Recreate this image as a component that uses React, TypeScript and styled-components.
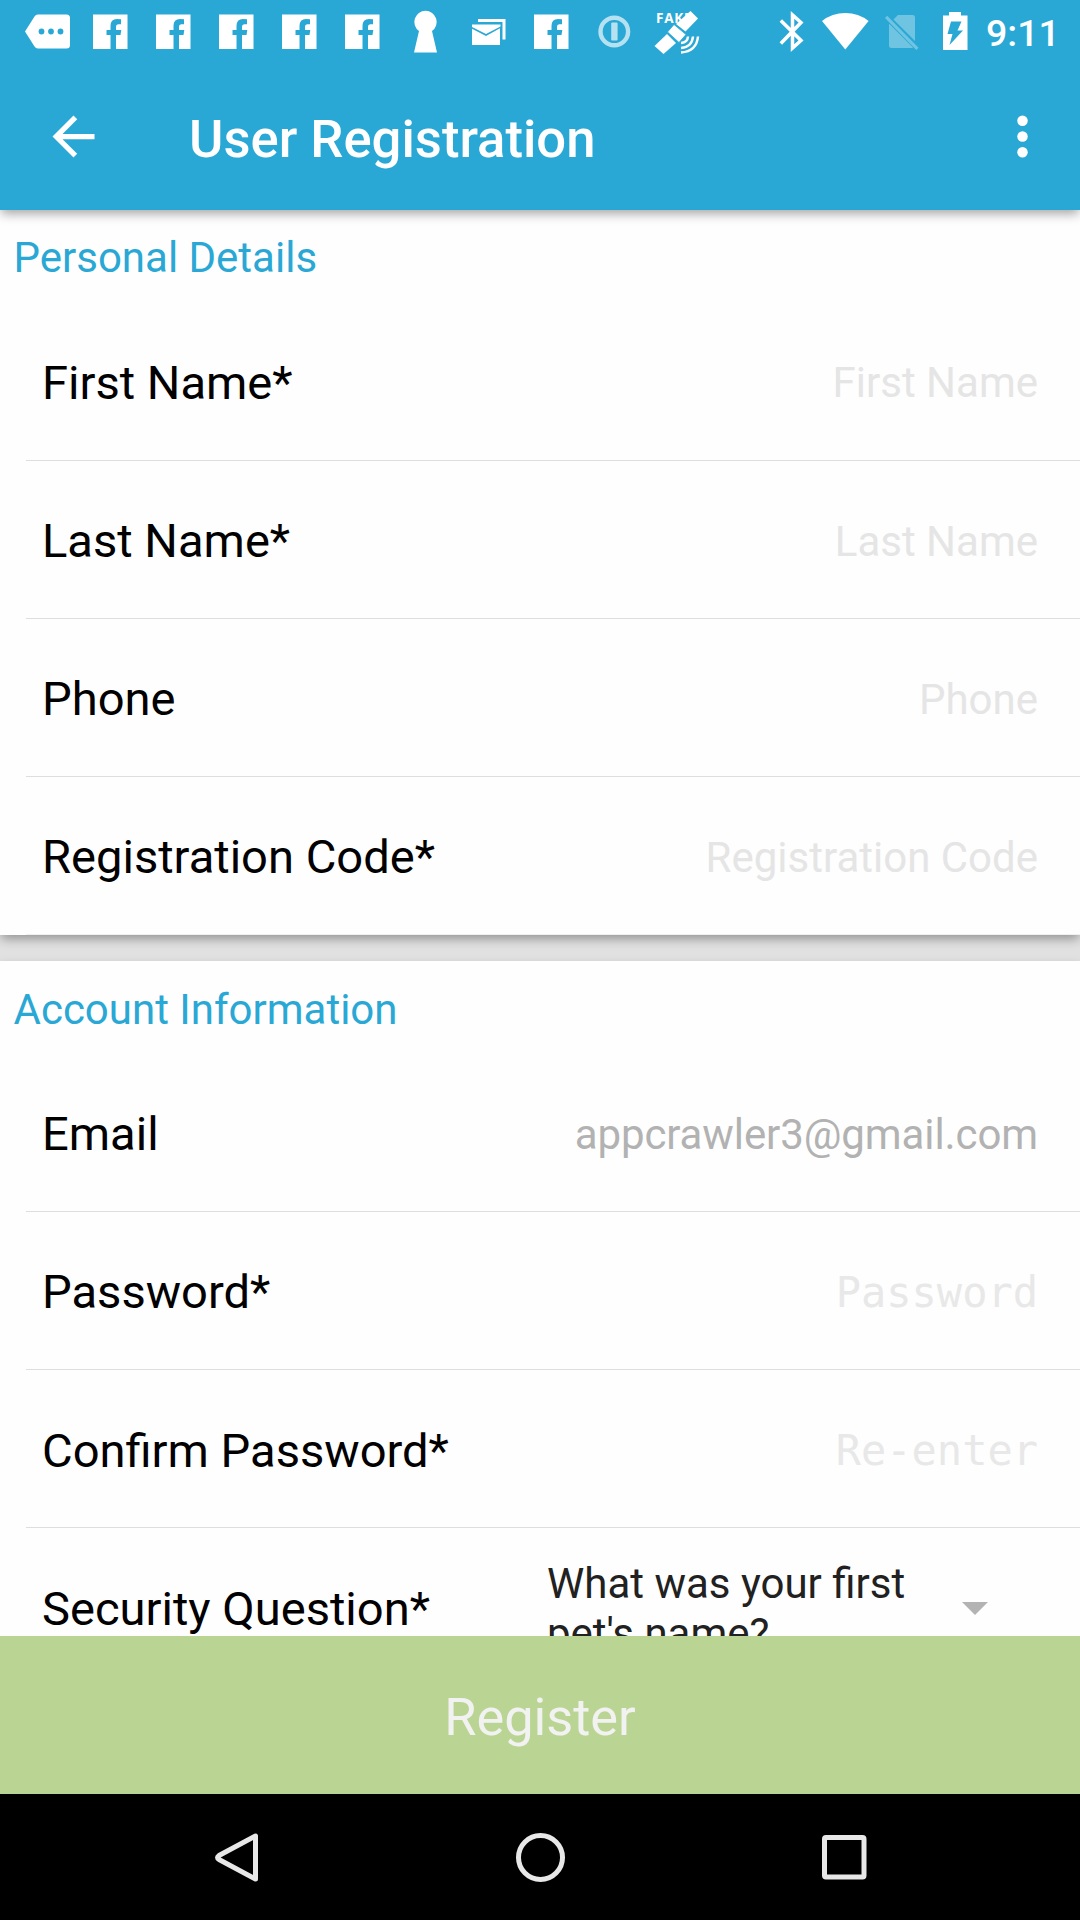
import React from "react";
import styled, { createGlobalStyle } from "styled-components";

const BLUE = "#2aa8d5";

const GlobalStyle = createGlobalStyle`
  * { box-sizing: border-box; }
  body { margin: 0; background: #e1e1e1; font-family: Roboto, "Noto Sans", sans-serif; }
`;

const Screen = styled.div`
  width: 1080px;
  height: 1920px;
  display: flex;
  flex-direction: column;
  overflow: hidden;
  background: #e1e1e1;
`;

const Header = styled.header`
  flex: none;
  position: relative;
  z-index: 2;
  background: ${BLUE};
  box-shadow: 0 5px 10px -1px rgba(0, 0, 0, 0.34);
`;

const StatusBar = styled.div`
  height: 63px;
  padding: 0 22px 0 15px;
  display: flex;
  align-items: center;
  justify-content: space-between;
`;

const IconStrip = styled.div`
  display: flex;
`;

const StatusIcon = styled.svg<{ $w?: number }>`
  display: block;
  flex: none;
  width: ${(p) => p.$w ?? 63}px;
  height: 63px;
  fill: #fff;
`;

const SystemStrip = styled.div`
  display: flex;
  align-items: center;
`;

const Clock = styled.span`
  width: 72px;
  padding-top: 3px;
  font-size: 37.5px;
  line-height: 43px;
  font-weight: 500;
  color: #fff;
  white-space: nowrap;
`;

const Toolbar = styled.div`
  height: 147px;
  padding: 0 26px 0 42px;
  display: flex;
  align-items: center;
`;

const ToolbarIcon = styled.svg`
  display: block;
  width: 63px;
  height: 63px;
  fill: #fff;
`;

const Title = styled.h1`
  flex: 1;
  margin: 0;
  padding: 4px 0 0 84px;
  font-size: 52.6px;
  line-height: 62px;
  font-weight: 500;
  color: #fff;
`;

const Form = styled.main`
  flex: none;
  height: 1426px;
  display: flex;
  flex-direction: column;
  gap: 26.1px;
  overflow: hidden;
`;

const Card = styled.section`
  flex: none;
  background: #fefefe;
  box-shadow: 0 5px 10px -1px rgba(0, 0, 0, 0.34);
`;

const SectionTitle = styled.h2`
  height: 92.5px;
  margin: 0;
  padding: 3px 0 0 13.5px;
  display: flex;
  align-items: center;
  font-size: 42px;
  font-weight: 400;
  color: ${BLUE};
`;

const Row = styled.div`
  height: 158.2px;
  margin-left: 26px;
  padding: 0 42px 0 16px;
  display: flex;
  align-items: center;
  justify-content: space-between;
  border-bottom: 1px solid #dedede;
  &:last-child { border-bottom-color: #f0f0f0; }
`;

const Label = styled.span`
  padding-top: 2.4px;
  font-size: 47.1px;
  color: #000;
`;

const Hint = styled.span<{ $mono?: boolean; $filled?: boolean }>`
  padding-top: 3.8px;
  font-family: ${(p) => (p.$mono ? '"DejaVu Sans Mono", monospace' : "inherit")};
  font-size: 42px;
  letter-spacing: ${(p) => (p.$filled ? "-0.1px" : "normal")};
  color: ${(p) => (p.$filled ? "#b2b2b2" : p.$mono ? "#e8e8e8" : "#e5e5e5")};
`;

const Picker = styled.div`
  width: 491px;
  padding-top: 3px;
  display: flex;
  align-items: center;
  justify-content: space-between;
`;

const PickerText = styled.span`
  width: 380px;
  font-size: 42px;
  line-height: 49.2px;
  color: #212121;
`;

const Caret = styled.svg`
  width: 26px;
  height: 13px;
  margin-right: 50px;
  fill: #b3b3b3;
`;

const RegisterButton = styled.button`
  flex: none;
  position: relative;
  z-index: 1;
  height: 158px;
  border: 0;
  padding: 3px 0 0;
  background: #bad593;
  color: #f2f2f2;
  font-family: inherit;
  font-size: 52.3px;
`;

const NavBar = styled.nav`
  flex: none;
  height: 126px;
  padding: 0 205px;
  display: flex;
  align-items: center;
  justify-content: space-between;
  background: #000;
`;

const NavIcon = styled.svg`
  display: block;
  width: 63px;
  height: 63px;
  fill: none;
  stroke: #e8e8e8;
  stroke-width: 5;
`;

const Messages = () => (
  <StatusIcon viewBox="0 0 63 63">
    <path d="M10 31.5 19.5 16.5Q20.700 14.500 23 14.500H51.500Q55 14.500 55 18V45Q55 48.500 51.500 48.500H23Q20.700 48.500 19.500 46.500Z" />
    <g fill={BLUE}>
      <circle cx="26.500" cy="31.500" r="2.900" />
      <circle cx="36" cy="31.500" r="2.900" />
      <circle cx="45.500" cy="31.500" r="2.900" />
    </g>
  </StatusIcon>
);

const Facebook = () => (
  <StatusIcon viewBox="0 0 63 63">
    <path d="M15 14.500H49.500V49H38V35H42.500L43.300 30H38V27Q38 24.200 40.600 24.200H43V19.300Q41 19 39 19Q32.500 19 32.500 26V30H28.500V35H32.500V49H15Z" />
  </StatusIcon>
);

const Keyhole = () => (
  <StatusIcon viewBox="0 0 63 63">
    <path d="M32.500 10.800a11.200 11.200 0 0 1 6.500 20.300L44 52.500H21L26 31.100A11.200 11.200 0 0 1 32.500 10.800Z" />
  </StatusIcon>
);

const Mail = () => (
  <StatusIcon viewBox="0 0 63 63">
    <path d="M22 19H49.500V39.500H46.500V22H22Z" />
    <path d="M16 24.500H44.500V26.500L30 34 16 27Z" />
    <path d="M16 28.800 30 36 44 28.300V45H16Z" />
  </StatusIcon>
);

const Info = () => (
  <StatusIcon viewBox="0 0 63 63">
    <g opacity="0.66">
      <circle cx="32.300" cy="31.500" r="13.800" fill="none" stroke="#fff" strokeWidth="4.400" />
      <rect x="29.200" y="22.500" width="6.400" height="18" rx="1" />
    </g>
  </StatusIcon>
);

const Satellite = () => (
  <StatusIcon viewBox="0 0 63 63">
    <text x="11" y="23" fontSize="13.500" fontWeight="700" letterSpacing="0.8" fontFamily="Open Sans, sans-serif">FAKE</text>
    <path d="M45.500 11 53 18.500 40.500 31.500 31 24Z" />
    <path d="M29 24.500 41 34.500 34 42.500 22.500 32Z" stroke={BLUE} strokeWidth="0.8" />
    <path d="M22 34 31 43 18.500 54 9.500 46Z" />
    <g fill="none" stroke="#fff" strokeWidth="2.500">
      <path d="M36 43Q42.500 42.500 43 36.500" />
      <path d="M36 48Q47 47 48 36.500" />
      <path d="M36 52.500Q51.500 51.500 53 36.500" />
    </g>
  </StatusIcon>
);

const Bluetooth = () => (
  <StatusIcon $w={33} viewBox="777 0 33 63">
    <path
      d="M780.800 20.500 801 40.500 792.500 48V15L801 22.500 780.800 43.500"
      fill="none"
      stroke="#fff"
      strokeWidth="3.500"
    />
  </StatusIcon>
);

const Wifi = () => (
  <StatusIcon $w={67} viewBox="810 0 67 63">
    <path d="M845.300 49.500 822 21Q832 13 845.300 13T868.600 21Z" />
  </StatusIcon>
);

const NoSim = () => (
  <StatusIcon $w={55} viewBox="877 0 55 63">
    <g opacity="0.32">
      <path d="M889.500 24 913 47.500Q912.500 48 911 48H891.500Q889 48 889 45.500V24Z" />
      <path d="M893.500 19.500 898 15H912.500Q915 15 915 17.500V41Z" />
      <path d="M885 18 887.200 15.800 918.500 47.800 916.300 50Z" />
    </g>
  </StatusIcon>
);

const Battery = () => (
  <StatusIcon $w={54} viewBox="932 0 54 63">
    <path d="M943 15.500H949V12H961V15.500H967.500V50H943Z" />
    <path fill={BLUE} d="M951 21.500H961.500L957.500 30.500H963L949.500 45L952.500 34H947.500Z" />
  </StatusIcon>
);

type Field = { label: string; hint: string; mono?: boolean; filled?: boolean };

const personal: Field[] = [
  { label: "First Name*", hint: "First Name" },
  { label: "Last Name*", hint: "Last Name" },
  { label: "Phone", hint: "Phone" },
  { label: "Registration Code*", hint: "Registration Code" },
];

const account: Field[] = [
  { label: "Email", hint: "appcrawler3@gmail.com", filled: true },
  { label: "Password*", hint: "Password", mono: true },
  { label: "Confirm Password*", hint: "Re-enter", mono: true },
];

const FieldRow = ({ label, hint, mono, filled }: Field) => (
  <Row>
    <Label>{label}</Label>
    <Hint $mono={mono} $filled={filled}>{hint}</Hint>
  </Row>
);

export default function App() {
  return (
    <Screen>
      <GlobalStyle />
      <Header>
        <StatusBar>
          <IconStrip>
            <Messages />
            <Facebook />
            <Facebook />
            <Facebook />
            <Facebook />
            <Facebook />
            <Keyhole />
            <Mail />
            <Facebook />
            <Info />
            <Satellite />
          </IconStrip>
          <SystemStrip>
            <Bluetooth />
            <Wifi />
            <NoSim />
            <Battery />
            <Clock>9:11</Clock>
          </SystemStrip>
        </StatusBar>
        <Toolbar>
          <ToolbarIcon viewBox="0 0 24 24">
            <path d="M20 11H7.830l5.590-5.590L12 4l-8 8 8 8 1.410-1.410L7.830 13H20v-2z" />
          </ToolbarIcon>
          <Title>User Registration</Title>
          <ToolbarIcon viewBox="0 0 24 24">
            <circle cx="12" cy="6" r="2" />
            <circle cx="12" cy="12" r="2" />
            <circle cx="12" cy="18" r="2" />
          </ToolbarIcon>
        </Toolbar>
      </Header>
      <Form>
        <Card>
          <SectionTitle>Personal Details</SectionTitle>
          {personal.map((f) => <FieldRow key={f.label} {...f} />)}
        </Card>
        <Card>
          <SectionTitle>Account Information</SectionTitle>
          {account.map((f) => <FieldRow key={f.label} {...f} />)}
          <Row>
            <Label>Security Question*</Label>
            <Picker>
              <PickerText>What was your first pet's name?</PickerText>
              <Caret viewBox="0 0 26 13"><path d="M0 0H26L13 13Z" /></Caret>
            </Picker>
          </Row>
        </Card>
      </Form>
      <RegisterButton>Register</RegisterButton>
      <NavBar>
        <NavIcon viewBox="205 1826 63 63">
          <path d="M255.500 1836V1879L219 1859.500Q216 1857.500 219 1855.500Z" strokeLinejoin="round" />
        </NavIcon>
        <NavIcon viewBox="509 1826 63 63">
          <circle cx="540.500" cy="1857.500" r="22" />
        </NavIcon>
        <NavIcon viewBox="812 1826 63 63">
          <rect x="824.500" y="1837.500" width="39.500" height="39.500" rx="1.500" />
        </NavIcon>
      </NavBar>
    </Screen>
  );
}
